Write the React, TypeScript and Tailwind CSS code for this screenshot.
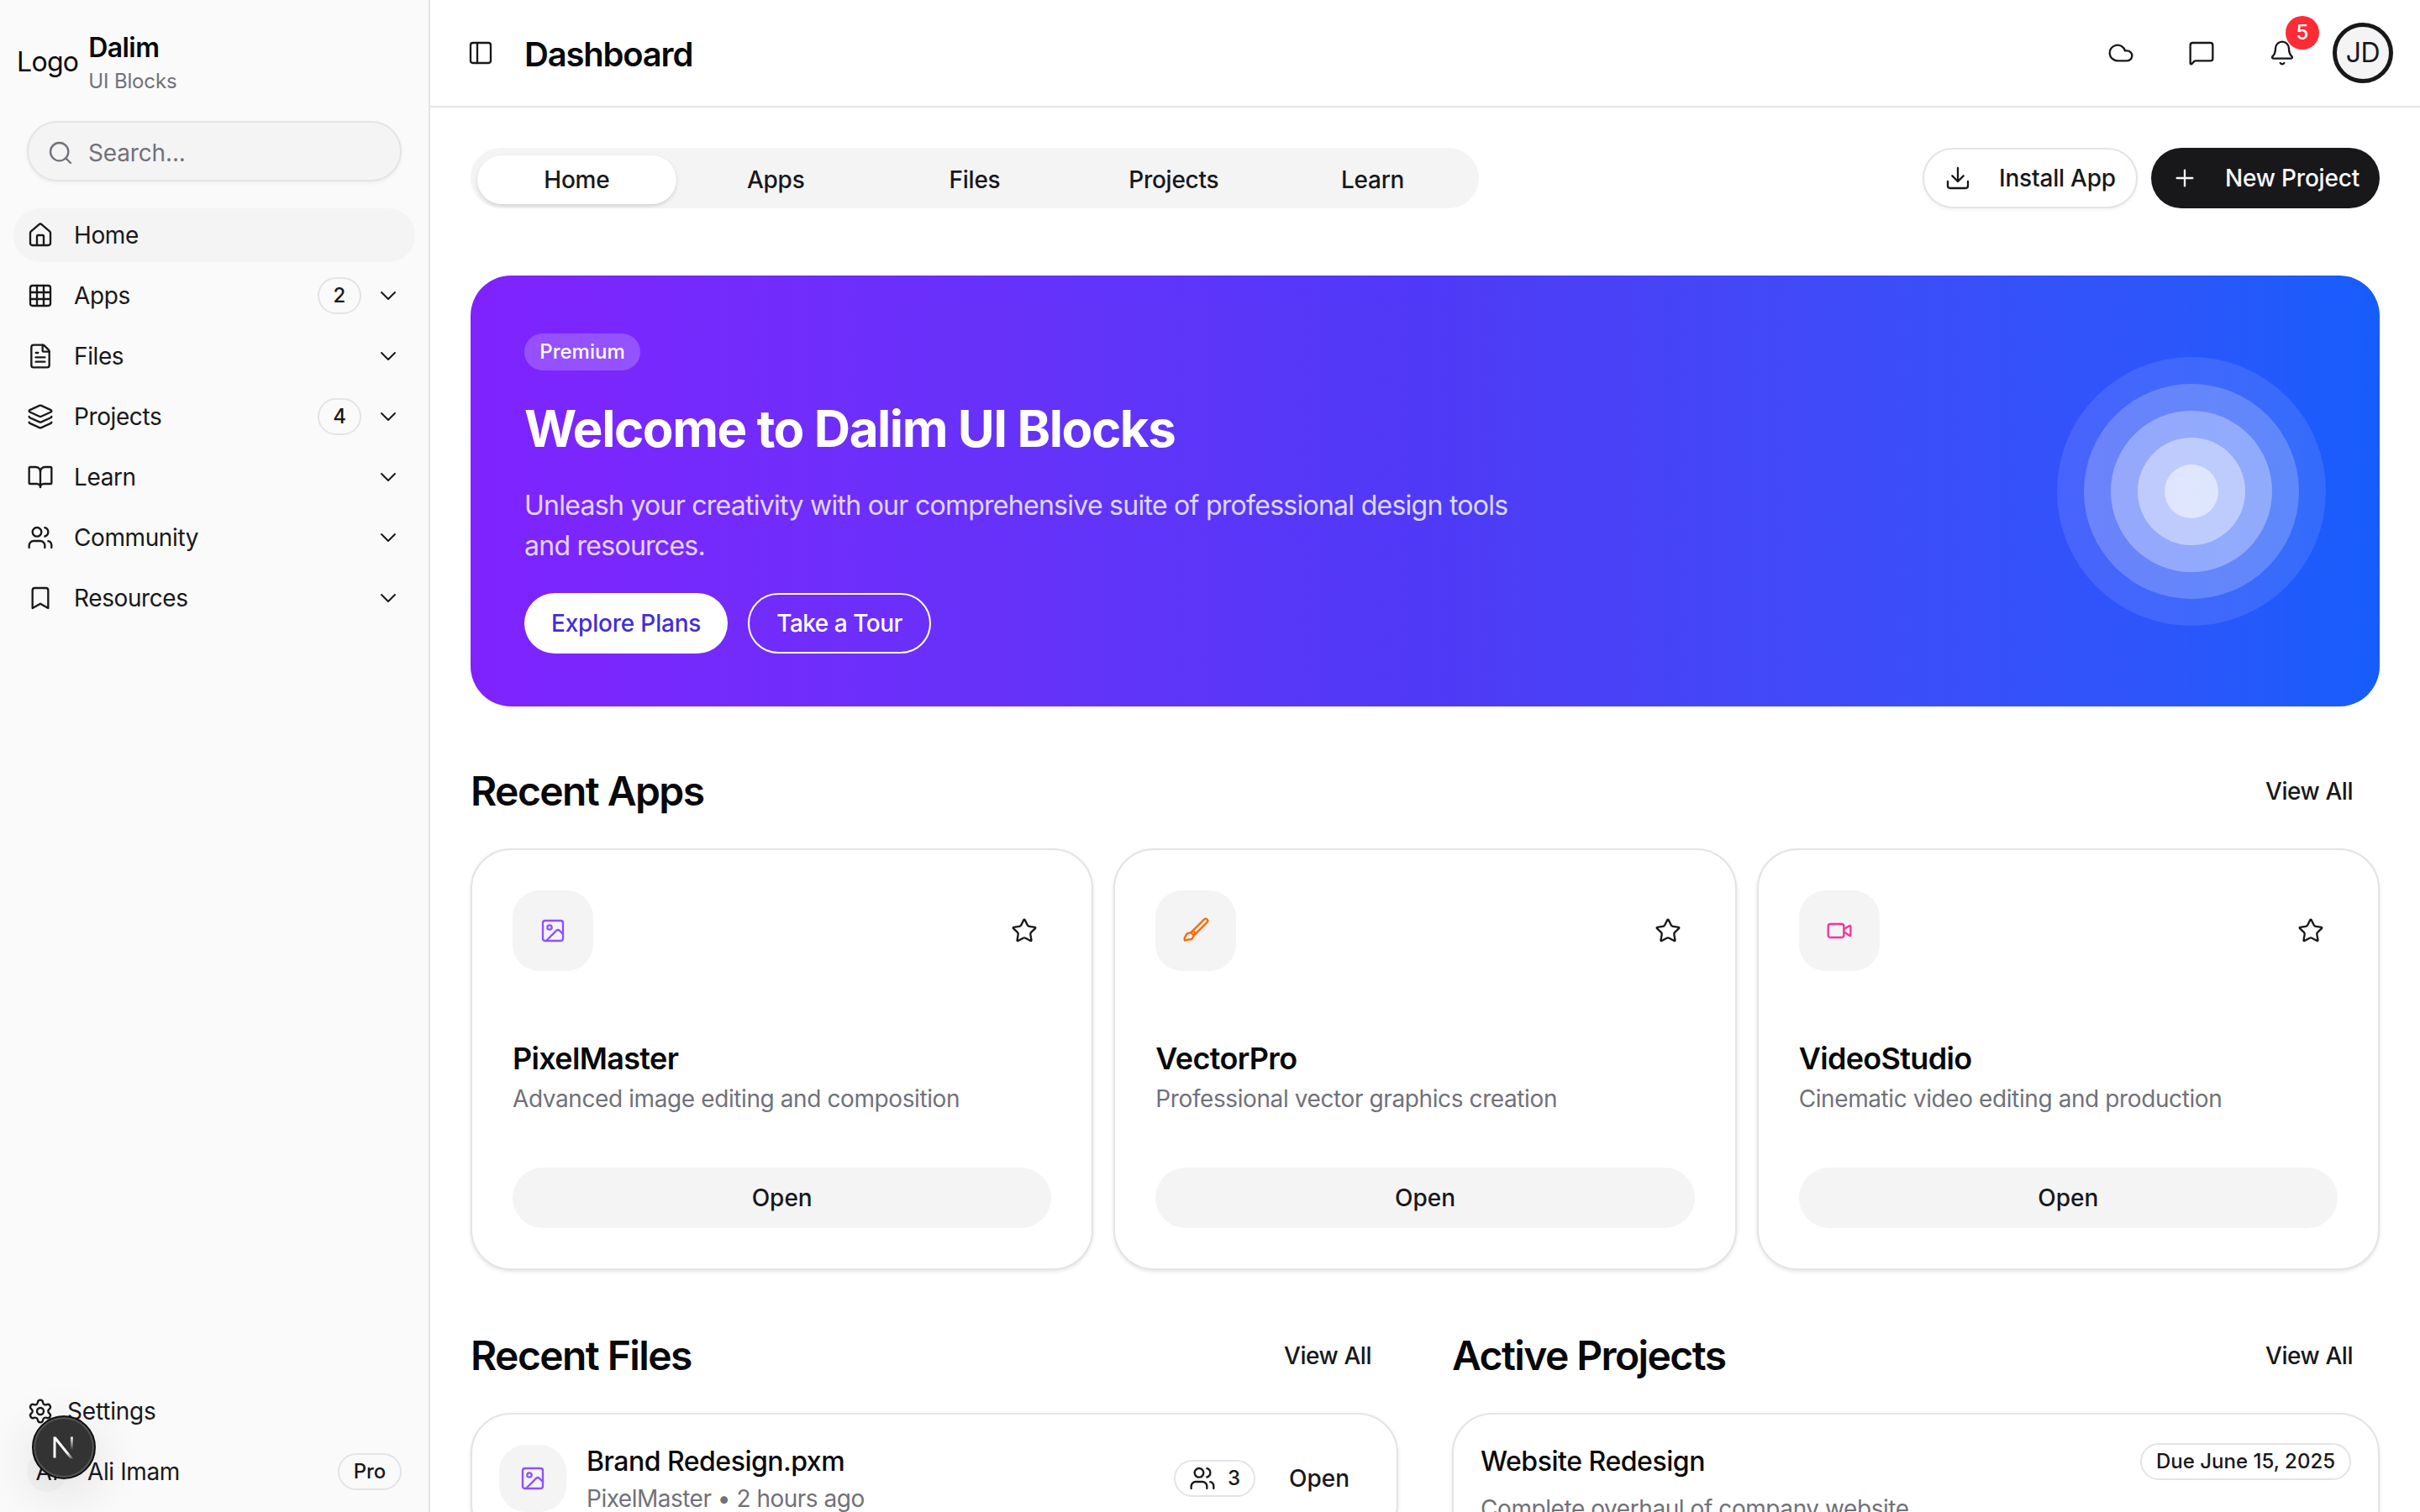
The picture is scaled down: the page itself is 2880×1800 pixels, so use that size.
import { Bell, BookOpen, Bookmark, ChevronDown, Cloud, Download, FileText, Grid3x3, House, Image, Layers, MessageSquare, PanelLeft, Plus, Search, Settings, Star, Users, Video } from "lucide-react";
import type { ReactNode } from "react";

const nav = [
  { label: "Home", icon: House, active: true },
  { label: "Apps", icon: Grid3x3, badge: "2", chevron: true },
  { label: "Files", icon: FileText, chevron: true },
  { label: "Projects", icon: Layers, badge: "4", chevron: true },
  { label: "Learn", icon: BookOpen, chevron: true },
  { label: "Community", icon: Users, chevron: true },
  { label: "Resources", icon: Bookmark, chevron: true },
];

function BrushIcon() {
  return (
    <svg width="32" height="32" viewBox="0 0 24 24" fill="none" stroke="currentColor" strokeWidth="1.75" strokeLinecap="round" strokeLinejoin="round" className="text-orange-500">
      <path d="M19.6 1.8 9.5 11.9l2.6 2.6L22.2 4.4a1.84 1.84 0 0 0-2.6-2.6z" />
      <path d="M9.5 11.9 7.8 13.6l2.6 2.6 1.7-1.7" />
      <path d="M7.8 13.6 4 14.8l-2 3.7.2 2.1 6.3-1.1 1.9-3.3" />
    </svg>
  );
}

const apps = [
  { name: "PixelMaster", desc: "Advanced image editing and composition", icon: <Image size={32} strokeWidth={1.75} className="text-violet-500" /> },
  { name: "VectorPro", desc: "Professional vector graphics creation", icon: <BrushIcon /> },
  { name: "VideoStudio", desc: "Cinematic video editing and production", icon: <Video size={32} strokeWidth={1.75} className="text-pink-500" /> },
];

function Sidebar() {
  return (
    <aside className="flex h-full w-[512px] shrink-0 flex-col border-r-2 border-[#e4e4e7] bg-[#fafafa] text-[#18181b]">
      <div className="flex items-center gap-[12px] pl-[20px] pt-[33px]">
        <span className="pt-[2px] text-[32px] leading-[48px] tracking-[-0.7px] text-[#09090b]">Logo</span>
        <div className="flex flex-col">
          <span className="text-[32px] leading-[48px] font-semibold tracking-[-0.6px] text-[#09090b]">Dalim</span>
          <span className="text-[24px] leading-[32px] tracking-[-0.15px] text-[#71717a]">UI Blocks</span>
        </div>
      </div>
      <div className="mx-8 mt-[31px] flex h-[72px] items-center gap-[17px] rounded-full border-2 border-[#e4e4e7] bg-[#f4f4f5] pl-[22px] pt-[3px] text-[28px] tracking-[-0.15px] text-[#71717a] shadow-[0_2px_4px_rgba(0,0,0,0.05)]">
        <Search size={32} strokeWidth={1.75} />
        <span>Search...</span>
      </div>
      <nav className="mt-8 flex flex-col gap-2 px-4">
        {nav.map((item) => (
          <div key={item.label} className={`flex h-16 items-center gap-6 rounded-full px-4 ${item.active ? "bg-[#f4f4f5]" : ""}`}>
            <item.icon size={32} strokeWidth={1.75} />
            <span className="flex-1 text-[28px] tracking-[-0.4px]">{item.label}</span>
            {item.badge && (
              <span className="flex h-[44px] w-[52px] items-center justify-center rounded-full border-2 border-[#e4e4e7] text-[24px] font-medium">{item.badge}</span>
            )}
            {item.chevron && <ChevronDown size={32} strokeWidth={1.5} className="-ml-2" />}
          </div>
        ))}
      </nav>
      <div className="mt-auto flex flex-col gap-2 px-4 pb-4">
        <div className="flex h-16 items-center gap-4 px-4">
          <Settings size={32} strokeWidth={1.75} />
          <span className="text-[28px] tracking-[-0.2px]">Settings</span>
        </div>
        <div className="flex h-16 items-center gap-6 px-4">
          <span className="flex h-12 w-12 items-center justify-center rounded-full bg-[#f4f4f5] text-[28px]">AI</span>
          <span className="flex-1 text-[28px] tracking-[-0.4px]">Ali Imam</span>
          <span className="flex h-[44px] w-[76px] items-center justify-center rounded-full border-2 border-[#e4e4e7] text-[24px] font-medium">Pro</span>
        </div>
      </div>
    </aside>
  );
}

function Header() {
  return (
    <header className="flex h-[128px] shrink-0 items-center border-b-2 border-[#e4e4e7] px-8 text-[#18181b]">
      <span className="flex h-14 w-14 items-center justify-center"><PanelLeft size={32} strokeWidth={1.75} /></span>
      <h1 className="ml-6 pt-[3px] text-[40px] font-semibold tracking-[-1.2px] text-[#09090b]">Dashboard</h1>
      <div className="ml-auto flex items-center gap-6">
        <span className="flex h-[72px] w-[72px] items-center justify-center"><Cloud size={32} strokeWidth={1.75} /></span>
        <span className="flex h-[72px] w-[72px] items-center justify-center"><MessageSquare size={32} strokeWidth={1.75} /></span>
        <span className="relative flex h-[72px] w-[72px] items-center justify-center">
          <Bell size={32} strokeWidth={1.75} />
          <span className="absolute -top-[8px] right-[-8px] flex h-10 w-10 items-center justify-center rounded-full bg-[#fb2c36] text-[24px] font-medium text-white">5</span>
        </span>
        <span className="flex h-[72px] w-[72px] items-center justify-center rounded-full border-[5px] border-[#18181b] bg-[#f4f4f5] text-[32px] tracking-[-0.5px] text-[#18181b]">JD</span>
      </div>
    </header>
  );
}

function SectionHead({ title }: { title: string }) {
  return (
    <div className="flex h-[72px] items-center justify-between">
      <h2 className="text-[48px] font-semibold tracking-[-1.6px] text-[#09090b]">{title}</h2>
      <span className="px-8 text-[28px] font-medium tracking-[-0.45px] text-[#18181b]">View All</span>
    </div>
  );
}

function Card({ children, className = "" }: { children: ReactNode; className?: string }) {
  return <div className={`rounded-[48px] border-2 border-[#e4e4e7] bg-white shadow-[0_2px_4px_rgba(0,0,0,0.1)] ${className}`}>{children}</div>;
}

export default function App() {
  return (
    <div className="relative flex h-screen w-full overflow-hidden bg-white font-[Inter,sans-serif]">
      <Sidebar />
      <div className="flex h-full min-w-0 flex-1 flex-col">
        <Header />
        <main className="flex-1 overflow-hidden px-12 pt-12 text-[#18181b]">
          <div className="flex items-center justify-between">
            <div className="grid h-[72px] w-[1200px] grid-cols-5 items-center rounded-full bg-[#f4f4f5] px-2 pb-[5px] pt-[9px] text-[28px] font-medium tracking-[-0.25px]">
              {["Home", "Apps", "Files", "Projects", "Learn"].map((t, i) => (
                <span key={t} className={`flex h-full items-center justify-center rounded-full ${i === 0 ? "bg-white shadow-[0_2px_4px_rgba(0,0,0,0.15)]" : ""}`}>{t}</span>
              ))}
            </div>
            <div className="flex gap-4 text-[28px] font-medium tracking-[-0.2px]">
              <span className="flex h-[72px] items-center gap-[33px] rounded-full border-2 border-[#e4e4e7] bg-white px-[24px] shadow-[0_2px_4px_rgba(0,0,0,0.05)]">
                <Download size={32} strokeWidth={1.75} />Install App
              </span>
              <span className="flex h-[72px] items-center gap-[32px] rounded-full bg-[#18181b] px-6 text-[#fafafa]">
                <Plus size={32} strokeWidth={1.75} />New Project
              </span>
            </div>
          </div>

          <section className="mt-20 flex h-[513px] items-center justify-between rounded-[48px] bg-gradient-to-r from-violet-600 via-indigo-600 to-blue-600 px-16 text-white">
            <div className="w-[1344px] pt-[5px]">
              <span className="flex h-[44px] w-[138px] items-center justify-center rounded-full bg-white/20 text-[24px] font-medium">Premium</span>
              <h2 className="mt-[33px] text-[60px] leading-[72px] font-bold tracking-[-1.43px]">Welcome to Dalim UI Blocks</h2>
              <p className="mt-8 w-[1200px] text-[32px] leading-[48px] tracking-[-0.73px] text-white/80">Unleash your creativity with our comprehensive suite of professional design tools and resources.</p>
              <div className="mt-[32px] flex gap-6 text-[28px] font-medium tracking-[-0.2px]">
                <span className="flex h-[72px] items-center rounded-full bg-white px-8 text-indigo-700">Explore Plans</span>
                <span className="flex h-[72px] items-center rounded-full border-2 border-white px-8 tracking-[-0.5px]">Take a Tour</span>
              </div>
            </div>
            <div className="flex h-[320px] w-[320px] items-center justify-center rounded-full bg-white/10">
              <div className="flex h-[256px] w-[256px] items-center justify-center rounded-full bg-white/20">
                <div className="flex h-[192px] w-[192px] items-center justify-center rounded-full bg-white/30">
                  <div className="flex h-[128px] w-[128px] items-center justify-center rounded-full bg-white/40">
                    <div className="h-16 w-16 rounded-full bg-white/50" />
                  </div>
                </div>
              </div>
            </div>
          </section>

          <section className="mt-[65px]">
            <SectionHead title="Recent Apps" />
            <div className="mt-8 grid grid-cols-3 gap-6">
              {apps.map((a) => (
                <Card key={a.name} className="p-12">
                  <div className="flex items-center justify-between">
                    <span className="flex h-24 w-24 items-center justify-center rounded-[32px] bg-[#f4f4f5]">{a.icon}</span>
                    <span className="flex h-16 w-16 items-center justify-center"><Star size={32} strokeWidth={1.75} /></span>
                  </div>
                  <h3 className="mt-[76px] text-[36px] leading-[56px] font-semibold tracking-[-0.67px] text-[#09090b]">{a.name}</h3>
                  <p className="text-[28px] leading-[40px] tracking-[-0.4px] text-[#71717a]">{a.desc}</p>
                  <div className="mt-[62px] flex h-[72px] items-center justify-center rounded-full bg-[#f4f4f5] text-[28px] font-medium">Open</div>
                </Card>
              ))}
            </div>
          </section>

          <div className="mt-[66px] grid grid-cols-2 gap-16">
            <section>
              <SectionHead title="Recent Files" />
              <Card className="mt-8 p-8">
                <div className="flex items-center">
                  <span className="flex h-20 w-20 items-center justify-center rounded-[32px] bg-[#f4f4f5]"><Image size={32} strokeWidth={1.75} className="text-violet-500" /></span>
                  <div className="ml-6 flex-1">
                    <div className="text-[32px] leading-[48px] font-medium tracking-[-0.5px] text-[#09090b]">Brand Redesign.pxm</div>
                    <div className="text-[28px] leading-[40px] tracking-[-0.5px] text-[#71717a]">PixelMaster • 2 hours ago</div>
                  </div>
                  <span className="flex h-[44px] items-center gap-[14px] rounded-full border-2 border-[#e4e4e7] px-[16px] text-[24px] font-medium"><Users size={32} strokeWidth={1.75} />3</span>
                  <span className="ml-4 px-6 text-[28px] font-medium">Open</span>
                </div>
              </Card>
            </section>
            <section>
              <SectionHead title="Active Projects" />
              <Card className="mt-8 p-8">
                <div className="flex items-center justify-between">
                  <span className="text-[32px] leading-[48px] font-medium tracking-[-0.46px] text-[#09090b]">Website Redesign</span>
                  <span className="flex h-[44px] items-center rounded-full border-2 border-[#e4e4e7] px-[17px] text-[24px] font-medium">Due June 15, 2025</span>
                </div>
                <p className="mt-3 text-[28px] leading-[40px] tracking-[-0.43px] text-[#71717a]">Complete overhaul of company website</p>
              </Card>
            </section>
          </div>
        </main>
      </div>

      <div className="absolute left-[38px] top-[1685px] flex h-[76px] w-[76px] items-center justify-center rounded-full border-2 border-[#111] bg-[#333] shadow-[0_16px_64px_rgba(0,0,0,0.12)] ring-2 ring-[#555] ring-inset">
        <svg width="34" height="34" viewBox="0 0 30 30" fill="none">
          <defs>
            <linearGradient id="nd" x1="10" y1="6" x2="26" y2="28" gradientUnits="userSpaceOnUse">
              <stop stopColor="#fff" />
              <stop offset="0.6" stopColor="#fff" />
              <stop offset="1" stopColor="#fff" stopOpacity="0" />
            </linearGradient>
            <linearGradient id="nr" x1="23" y1="3" x2="23" y2="18" gradientUnits="userSpaceOnUse">
              <stop stopColor="#fff" />
              <stop offset="1" stopColor="#fff" stopOpacity="0" />
            </linearGradient>
          </defs>
          <path d="M4 26V4h2.6L25 27h-3.4L6.6 8.4V26H4z" fill="url(#nd)" />
          <rect x="22" y="4" width="2.6" height="15" fill="url(#nr)" />
        </svg>
      </div>
    </div>
  );
}
